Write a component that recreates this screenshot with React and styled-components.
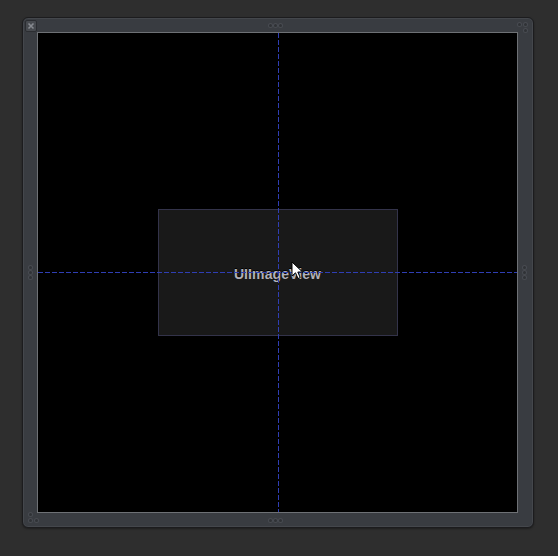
import React from "react";
import styled, { createGlobalStyle } from "styled-components";

const GlobalStyle = createGlobalStyle`
  html, body {
    margin: 0;
    padding: 0;
    background: #2e2e2e;
    font-family: "Liberation Sans", Arial, sans-serif;
  }
`;

const Page = styled.div`
  width: 558px;
  height: 556px;
  box-sizing: border-box;
  padding: 17px 0 0 22px;
  background: #2e2e2e;
`;

const Frame = styled.div`
  position: relative;
  width: 512px;
  height: 511px;
  box-sizing: border-box;
  padding: 14px 15px 14px 14px;
  background: #393c41;
  border: 1px solid #1c1c1e;
  border-radius: 6px;
  box-shadow: inset 0 0 0 1px #44474c, 0 1px 2px rgba(0, 0, 0, 0.35);
`;

const Canvas = styled.div`
  position: relative;
  width: 100%;
  height: 100%;
  box-sizing: border-box;
  background: #000;
  border: 1px solid #6e7175;
  display: flex;
  align-items: center;
  justify-content: center;
`;

const ImageView = styled.div`
  width: 240px;
  height: 127px;
  box-sizing: border-box;
  background: #191919;
  border: 1px solid #33334a;
  display: flex;
  align-items: center;
  justify-content: center;
`;

const Label = styled.span`
  color: #b1b1b8;
  font-size: 14px;
  font-weight: bold;
  letter-spacing: 0.1px;
  text-shadow: 0 -1px 0 #000;
  margin-top: 2px;
`;

const GuideV = styled.div`
  position: absolute;
  top: 0;
  bottom: 0;
  left: 240px;
  width: 1px;
  background: repeating-linear-gradient(
    to bottom,
    #2f3eb4 0 5px,
    transparent 5px 7px
  );
`;

const GuideH = styled.div`
  position: absolute;
  left: 0;
  right: 0;
  top: 239px;
  height: 1px;
  background: repeating-linear-gradient(
    to right,
    #2f3eb4 0 5px,
    transparent 5px 7px
  );
`;

const Handle = styled.div`
  position: absolute;
  display: flex;
  flex-direction: ${({ vertical }) => (vertical ? "column" : "row")};
  gap: 2px;
  ${({ pos }) => pos}
`;

const Dot = styled.span`
  width: 3px;
  height: 3px;
  border-radius: 50%;
  background: #303236;
  box-shadow: 0 0 0 1px #484b51;
`;

const CloseBox = styled.div`
  position: absolute;
  left: 2px;
  top: 2px;
  width: 10px;
  height: 10px;
  border-radius: 2px;
  background: #474a4f;
  border: 1px solid #2b2d31;
  display: flex;
  align-items: center;
  justify-content: center;
`;

const Cluster = styled.div`
  position: absolute;
  width: 9px;
  height: 9px;
  ${({ pos }) => pos}
`;

const ClusterDot = styled(Dot)`
  position: absolute;
  ${({ at }) => at}
`;

const Cursor = styled.svg`
  position: absolute;
  left: 253px;
  top: 228px;
`;

function Dots({ pos, vertical }) {
  return (
    <Handle pos={pos} vertical={vertical}>
      <Dot />
      <Dot />
      <Dot />
    </Handle>
  );
}

export default function App() {
  return (
    <>
      <GlobalStyle />
      <Page>
        <Frame>
          <CloseBox>
            <svg width="8" height="8" viewBox="0 0 8 8">
              <path d="M1.5 1.5 L6.5 6.5 M6.5 1.5 L1.5 6.5" stroke="#878a90" strokeWidth="1.6" />
            </svg>
          </CloseBox>
          <Dots pos="top: 6px; left: 246px;" />
          <Dots pos="bottom: 5px; left: 246px;" />
          <Dots pos="left: 6px; top: 248px;" vertical />
          <Dots pos="right: 7px; top: 248px;" vertical />
          <Cluster pos="top: 5px; right: 6px;">
            <ClusterDot at="left: 0; top: 0;" />
            <ClusterDot at="left: 6px; top: 0;" />
            <ClusterDot at="left: 6px; top: 6px;" />
          </Cluster>
          <Cluster pos="bottom: 5px; left: 6px;">
            <ClusterDot at="left: 0; top: 0;" />
            <ClusterDot at="left: 0; top: 6px;" />
            <ClusterDot at="left: 6px; top: 6px;" />
          </Cluster>
          <Canvas>
            <ImageView>
              <Label>UIImageView</Label>
            </ImageView>
            <GuideV />
            <GuideH />
            <Cursor width="14" height="20" viewBox="0 0 14 20">
              <path
                d="M1 1 L1 15 L4.5 11.8 L7 17.5 L9.2 16.6 L6.8 11 L11.5 11 Z"
                fill="#fff"
                stroke="#000"
                strokeWidth="1"
                strokeLinejoin="round"
              />
            </Cursor>
          </Canvas>
        </Frame>
      </Page>
    </>
  );
}
